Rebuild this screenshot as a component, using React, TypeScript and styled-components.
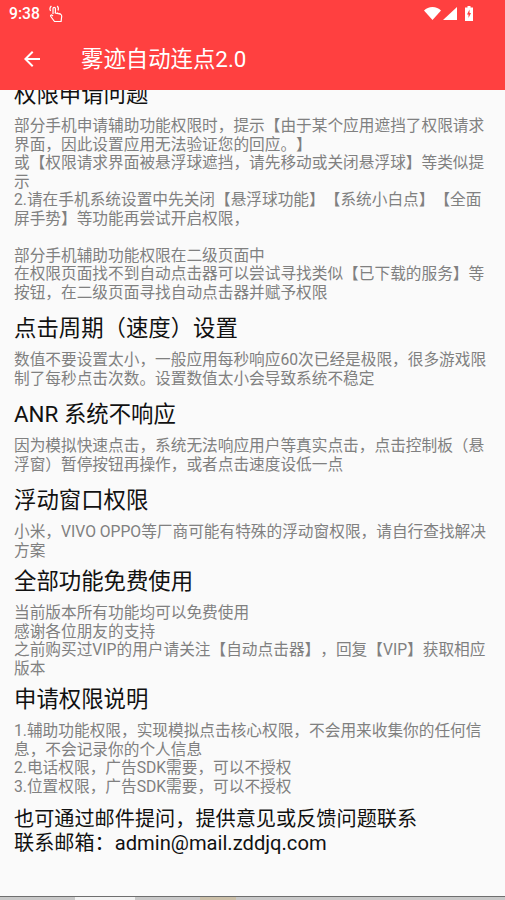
import React from "react";
import styled, { createGlobalStyle } from "styled-components";

const Global = createGlobalStyle`
  html, body { margin: 0; padding: 0; background: #fafafa; }
  body { font-family: Roboto, "Noto Sans CJK SC", sans-serif; overflow: hidden; text-spacing-trim: space-all; }
`;
const Page = styled.div`
  width: 505px; height: 900px; display: flex; flex-direction: column; overflow: hidden; background: #fafafa;
`;
const AppHeader = styled.header`
  height: 90px; flex: none; background: #ff4040; color: #fff; display: flex; flex-direction: column;
`;
const StatusBar = styled.div`
  height: 27px; display: flex; align-items: center; padding: 0 32px 0 9px; font-size: 15.7px; font-weight: 500; gap: 8px; color: #fff;
`;
const StatusRight = styled.div`margin-left: auto; display: flex; align-items: center; gap: 2px;`;
const BatteryIcon = styled.svg`margin-left: 6px;`;
const Toolbar = styled.div`
  height: 63px; display: flex; align-items: center; padding-left: 20px; gap: 37px;
`;
const Title = styled.h1`
  margin: 0; font-size: 22.4px; font-weight: 400; line-height: 30px;
`;
const Scroller = styled.main`flex: 1; overflow: hidden; min-height: 0;`;
const Content = styled.div`margin-top: -11px; padding: 0 14px;`;
const Heading = styled.h2<{ $tight?: boolean }>`
  margin: ${(p) => (p.$tight ? "-5px" : "0")} 0 8px; font-size: 22.4px; font-weight: 400; line-height: 30px; color: #111;
`;
const Body = styled.p`
  margin: 0 0 11px; font-size: 15.68px; line-height: 18.5px; color: #808080;
`;
const Contact = styled.p`margin: 0; font-size: 20.16px; line-height: 24px; color: #111;`;
const Strip = styled.div`height: 3px; flex: none; display: flex; background: #c8c8c8; border-top: 1px solid #6e6e6e; margin-top: -1px;`;
const StripPart = styled.div<{ $w: number; $c: string }>`width: ${(p) => p.$w}px; background: ${(p) => p.$c};`;

export default function App() {
  return (
    <Page>
      <Global />
      <AppHeader>
        <StatusBar>
          <span>9:38</span>
          <svg width="15" height="18" viewBox="0 0 15 18" fill="none" stroke="#fff" strokeWidth="1.2"><path d="M5 9V3.500a1.200 1.200 0 0 1 2.400 0V8l5 1.200c1 .3 1.400 1 1.300 2l-.6 5.300H6.500L2.800 11.500c-.8-1 .5-2 1.300-1.200L5 11" /><path d="M7.400 8V7M9.600 8.500V7.500M11.800 9V8" /><path d="M2.600 6a4 4 0 0 1 .8-5M10 5.500a4 4 0 0 0-.8-4.500" /></svg>
          <StatusRight>
            <svg width="17" height="13" viewBox="0 0 17 13" fill="#fff"><path d="M0 3.500C2.200 1.400 5.200 0 8.500 0s6.300 1.400 8.500 3.500L8.500 13z" /></svg>
            <svg width="14" height="13" viewBox="0 0 14 13" fill="#fff"><path d="M14 0v13H0z" /></svg>
            <BatteryIcon width="8" height="15" viewBox="0 0 8 15"><path fill="#fff" d="M2.500 0h3v1.500H8V15H0V1.500h2.500z" /><path fill="#ff4040" d="M4.500 3.500 2 8.500h1.500V12L6 7H4.500z" /></BatteryIcon>
          </StatusRight>
        </StatusBar>
        <Toolbar>
          <svg width="24" height="24" viewBox="0 0 24 24" fill="#fff"><path d="M20 11H7.830l5.590-5.590L12 4l-8 8 8 8 1.410-1.410L7.830 13H20z" /></svg>
          <Title>雾迹自动连点2.0</Title>
        </Toolbar>
      </AppHeader>
      <Scroller>
        <Content>
          <Heading>权限申请问题</Heading>
          <Body>部分手机申请辅助功能权限时，提示【由于某个应用遮挡了权限请求界面，因此设置应用无法验证您的回应。】<br />或【权限请求界面被悬浮球遮挡，请先移动或关闭悬浮球】等类似提示<br />2.请在手机系统设置中先关闭【悬浮球功能】【系统小白点】【全面屏手势】等功能再尝试开启权限，<br /><br />部分手机辅助功能权限在二级页面中<br />在权限页面找不到自动点击器可以尝试寻找类似【已下载的服务】等按钮，在二级页面寻找自动点击器并赋予权限</Body>
          <Heading>点击周期（速度）设置</Heading>
          <Body>数值不要设置太小，一般应用每秒响应60次已经是极限，很多游戏限制了每秒点击次数。设置数值太小会导致系统不稳定</Body>
          <Heading>ANR 系统不响应</Heading>
          <Body>因为模拟快速点击，系统无法响应用户等真实点击，点击控制板（悬浮窗）暂停按钮再操作，或者点击速度设低一点</Body>
          <Heading>浮动窗口权限</Heading>
          <Body>小米，VIVO OPPO等厂商可能有特殊的浮动窗权限，请自行查找解决方案</Body>
          <Heading $tight>全部功能免费使用</Heading>
          <Body>当前版本所有功能均可以免费使用<br />感谢各位朋友的支持<br />之前购买过VIP的用户请关注【自动点击器】，回复【VIP】获取相应版本</Body>
          <Heading $tight>申请权限说明</Heading>
          <Body>1.辅助功能权限，实现模拟点击核心权限，不会用来收集你的任何信息，不会记录你的个人信息<br />2.电话权限，广告SDK需要，可以不授权<br />3.位置权限，广告SDK需要，可以不授权</Body>
          <Contact>也可通过邮件提问，提供意见或反馈问题联系<br />联系邮箱：admin@mail.zddjq.com</Contact>
        </Content>
      </Scroller>
      <Strip>
        <StripPart $w={75} $c="#c8c8c8" />
        <StripPart $w={60} $c="#f2f2f2" />
        <StripPart $w={65} $c="#c8c8c8" />
        <StripPart $w={36} $c="#cbbfa8" />
      </Strip>
    </Page>
  );
}
